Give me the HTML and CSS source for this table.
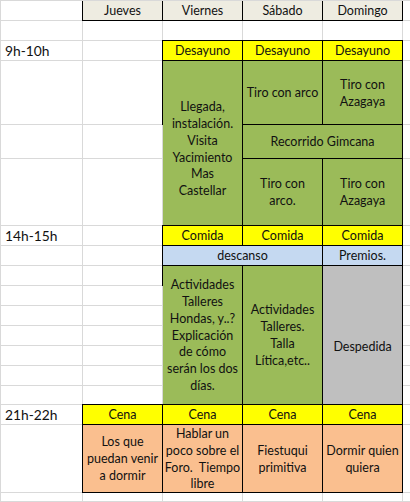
FILE: index.html
```html
<!DOCTYPE html>
<html lang="es">
<head>
<meta charset="utf-8">
<title>Horario</title>
<link rel="stylesheet" href="styles.css">
</head>
<body>
<div class="sheet">
  <!-- row 1 -->
  <div class="c"></div>
  <div class="c h">Jueves</div>
  <div class="c h">Viernes</div>
  <div class="c h">Sábado</div>
  <div class="c h">Domingo</div>
  <div class="c"></div>
  <!-- row 2 -->
  <div class="c"></div><div class="c"></div><div class="c"></div><div class="c"></div><div class="c"></div><div class="c"></div>
  <!-- row 3 -->
  <div class="c t">9h-10h</div>
  <div class="c"></div>
  <div class="c b y">Desayuno</div>
  <div class="c b y">Desayuno</div>
  <div class="c b y">Desayuno</div>
  <div class="c"></div>
  <!-- row 4 -->
  <div class="c"></div>
  <div class="c"></div>
  <div class="c b g r3 shift">Llegada,<br>instalación.<br>Visita<br>Yacimiento<br>Mas<br>Castellar</div>
  <div class="c b g">Tiro con arco</div>
  <div class="c b g">Tiro con<br>Azagaya</div>
  <div class="c"></div>
  <!-- row 5 -->
  <div class="c"></div>
  <div class="c"></div>
  <div class="c b g s2">Recorrido Gimcana</div>
  <div class="c"></div>
  <!-- row 6 -->
  <div class="c"></div>
  <div class="c"></div>
  <div class="c b g">Tiro con<br>arco.</div>
  <div class="c b g">Tiro con<br>Azagaya</div>
  <div class="c"></div>
  <!-- row 7 -->
  <div class="c t">14h-15h</div>
  <div class="c"></div>
  <div class="c b y">Comida</div>
  <div class="c b y">Comida</div>
  <div class="c b y">Comida</div>
  <div class="c"></div>
  <!-- row 8 -->
  <div class="c"></div>
  <div class="c"></div>
  <div class="c b bl s2">descanso</div>
  <div class="c b bl up">Premios.</div>
  <div class="c"></div>
  <!-- row 9 -->
  <div class="c"></div>
  <div class="c"></div>
  <div class="c b g r7">Actividades<br>Talleres<br>Hondas, y..?<br>Explicación<br>de cómo<br>serán los dos<br>días.</div>
  <div class="c b g r7">Actividades<br>Talleres.<br>Talla<br>Lítica,etc..</div>
  <div class="c b gr r7 low">Despedida</div>
  <div class="c"></div>
  <!-- rows 10-15 -->
  <div class="c"></div><div class="c"></div><div class="c"></div>
  <div class="c"></div><div class="c"></div><div class="c"></div>
  <div class="c"></div><div class="c"></div><div class="c"></div>
  <div class="c"></div><div class="c"></div><div class="c"></div>
  <div class="c"></div><div class="c"></div><div class="c"></div>
  <div class="c"></div><div class="c"></div><div class="c"></div>
  <!-- row 16 -->
  <div class="c t">21h-22h</div>
  <div class="c b y">Cena</div>
  <div class="c b y">Cena</div>
  <div class="c b y">Cena</div>
  <div class="c b y">Cena</div>
  <div class="c"></div>
  <!-- row 17 -->
  <div class="c"></div>
  <div class="c b o">Los que<br>puedan venir<br>a dormir</div>
  <div class="c b o">Hablar un<br>poco sobre el<br>Foro.&nbsp; Tiempo<br>libre</div>
  <div class="c b o">Fiestuqui<br>primitiva</div>
  <div class="c b o">Dormir quien<br>quiera</div>
  <div class="c"></div>
  <!-- row 18 -->
  <div class="c"></div><div class="c"></div><div class="c"></div><div class="c"></div><div class="c"></div><div class="c"></div>
</div>
</body>
</html>
```

FILE: styles.css
```css
* {
  box-sizing: border-box;
}

html, body {
  margin: 0;
  padding: 0;
  background: #ffffff;
}

body {
  font-family: Lato, "Liberation Sans", sans-serif;
  color: #111111;
}

.sheet {
  display: grid;
  grid-template-columns: 82px 80px 80px 80px 80px 8px;
  grid-template-rows: 20px 20px 20px 64px 34px 67px 20px 20px 20px 20px 20px 20px 20px 20px 19px 20px 68px 9px;
  width: 410px;
  height: 502px;
  overflow: hidden;
  border-top: 1px solid #d9d9d9;
  border-left: 1px solid #d9d9d9;
}

.c {
  display: flex;
  align-items: center;
  justify-content: center;
  text-align: center;
  border-right: 1px solid #d9d9d9;
  border-bottom: 1px solid #d9d9d9;
  font-size: 12.5px;
  line-height: 16.8px;
  padding-top: 2px;
  white-space: nowrap;
}

.t {
  justify-content: flex-start;
  padding-left: 4px;
  font-size: 13.8px;
}

.h {
  background: #eeece1;
  border-right-color: #000;
  border-bottom-color: #000;
  box-shadow: -1px 0 0 0 #000;
}

.b {
  border-right-color: #000;
  border-bottom-color: #000;
  box-shadow: 0 -1px 0 0 #000, -1px 0 0 0 #000, -1px -1px 0 0 #000;
}

.y { background: #ffff00; }
.g { background: #9bbb59; }
.bl { background: #c5d9f1; }
.gr { background: #bfbfbf; }
.o { background: #fabf8f; }

.s2 { grid-column: span 2; }
.r3 { grid-row: span 3; }
.r7 { grid-row: span 7; }

.shift { padding-top: 13px; }
.low { padding-top: 24px; }
.up { padding-top: 1px; }
```
